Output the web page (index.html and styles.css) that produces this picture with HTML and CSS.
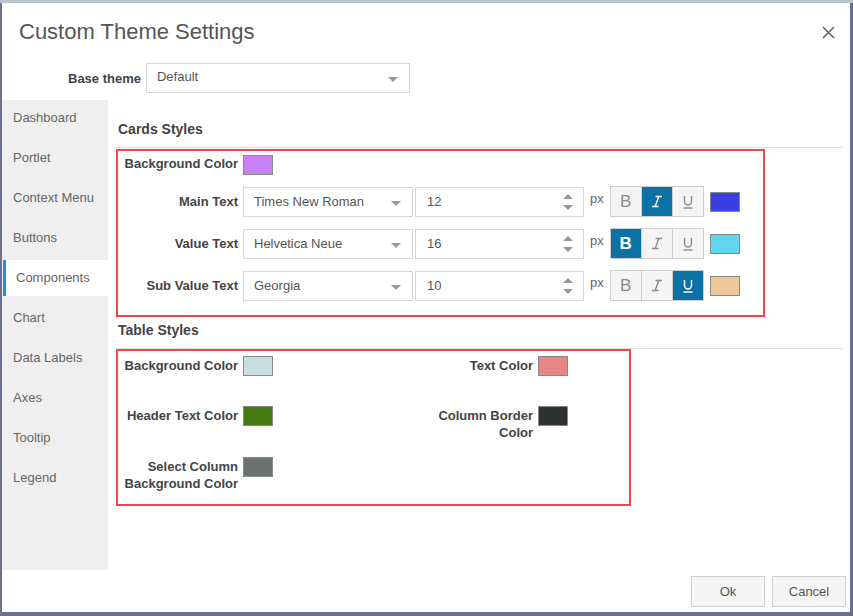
FILE: index.html
```html
<!DOCTYPE html>
<html>
<head>
<meta charset="utf-8">
<link rel="stylesheet" href="styles.css">
</head>
<body>
<div class="dialog">
  <div class="header">
    <div class="title">Custom Theme Settings</div>
    <svg class="close" width="13" height="13" viewBox="0 0 13 13"><path d="M1 1L12 12M12 1L1 12" stroke="#666" stroke-width="1.6" fill="none"/></svg>
  </div>
  <div class="base-row">
    <span class="base-label">Base theme</span>
    <div class="select base-select"><span>Default</span><i class="caret"></i></div>
  </div>
  <div class="main">
    <ul class="sidebar">
      <li>Dashboard</li>
      <li>Portlet</li>
      <li>Context Menu</li>
      <li>Buttons</li>
      <li class="active">Components</li>
      <li>Chart</li>
      <li>Data Labels</li>
      <li>Axes</li>
      <li>Tooltip</li>
      <li>Legend</li>
    </ul>
    <div class="content">
      <h2 class="section-title">Cards Styles</h2>
      <div class="box cards">
        <div class="color-row">
          <span class="label">Background Color</span>
          <span class="swatch" style="background:#c881f2"></span>
        </div>
        <div class="font-row">
          <span class="label">Main Text</span>
          <div class="select font-select"><span>Times New Roman</span><i class="caret"></i></div>
          <div class="number"><span>12</span><i class="spin"><b class="up"></b><b class="down"></b></i></div>
          <span class="px">px</span>
          <div class="btn-group">
            <span class="fbtn"><span class="bold-b">B</span></span>
            <span class="fbtn on"><svg width="12" height="13" viewBox="0 0 12 13"><path d="M4.5 1.5H11M1 11.5H7.5M7.8 1.5L4.2 11.5" stroke="currentColor" stroke-width="1.4" fill="none"/></svg></span>
            <span class="fbtn"><svg width="12" height="14" viewBox="0 0 12 14"><path d="M2.5 1V6.5A3.5 3.5 0 0 0 9.5 6.5V1" stroke="currentColor" stroke-width="1.4" fill="none"/><path d="M1.5 13H10.5" stroke="currentColor" stroke-width="1.4"/></svg></span>
          </div>
          <span class="swatch sw-row" style="background:#3b3fe3"></span>
        </div>
        <div class="font-row">
          <span class="label">Value Text</span>
          <div class="select font-select"><span>Helvetica Neue</span><i class="caret"></i></div>
          <div class="number"><span>16</span><i class="spin"><b class="up"></b><b class="down"></b></i></div>
          <span class="px">px</span>
          <div class="btn-group">
            <span class="fbtn on"><span class="bold-b">B</span></span>
            <span class="fbtn"><svg width="12" height="13" viewBox="0 0 12 13"><path d="M4.5 1.5H11M1 11.5H7.5M7.8 1.5L4.2 11.5" stroke="currentColor" stroke-width="1.4" fill="none"/></svg></span>
            <span class="fbtn"><svg width="12" height="14" viewBox="0 0 12 14"><path d="M2.5 1V6.5A3.5 3.5 0 0 0 9.5 6.5V1" stroke="currentColor" stroke-width="1.4" fill="none"/><path d="M1.5 13H10.5" stroke="currentColor" stroke-width="1.4"/></svg></span>
          </div>
          <span class="swatch sw-row" style="background:#62d6ef"></span>
        </div>
        <div class="font-row">
          <span class="label">Sub Value Text</span>
          <div class="select font-select"><span>Georgia</span><i class="caret"></i></div>
          <div class="number"><span>10</span><i class="spin"><b class="up"></b><b class="down"></b></i></div>
          <span class="px">px</span>
          <div class="btn-group">
            <span class="fbtn"><span class="bold-b">B</span></span>
            <span class="fbtn"><svg width="12" height="13" viewBox="0 0 12 13"><path d="M4.5 1.5H11M1 11.5H7.5M7.8 1.5L4.2 11.5" stroke="currentColor" stroke-width="1.4" fill="none"/></svg></span>
            <span class="fbtn on"><svg width="12" height="14" viewBox="0 0 12 14"><path d="M2.5 1V6.5A3.5 3.5 0 0 0 9.5 6.5V1" stroke="currentColor" stroke-width="1.4" fill="none"/><path d="M1.5 13H10.5" stroke="currentColor" stroke-width="1.4"/></svg></span>
          </div>
          <span class="swatch sw-row" style="background:#efc89c"></span>
        </div>
      </div>
      <h2 class="section-title second">Table Styles</h2>
      <div class="box table">
        <div class="color-row">
          <span class="label">Background Color</span>
          <span class="swatch" style="background:#c7dfe0"></span>
        </div>
        <div class="color-row">
          <span class="label">Text Color</span>
          <span class="swatch" style="background:#e88585"></span>
        </div>
        <div class="color-row">
          <span class="label">Header Text Color</span>
          <span class="swatch" style="background:#447a10"></span>
        </div>
        <div class="color-row">
          <span class="label">Column Border Color</span>
          <span class="swatch" style="background:#2c3230"></span>
        </div>
        <div class="color-row">
          <span class="label">Select Column Background Color</span>
          <span class="swatch" style="background:#6b7270"></span>
        </div>
      </div>
    </div>
  </div>
  <div class="footer">
    <button class="btn">Ok</button>
    <button class="btn">Cancel</button>
  </div>
</div>
</body>
</html>
```
FILE: styles.css
```css
* { box-sizing: border-box; }
html, body { margin: 0; padding: 0; }
body {
  width: 853px;
  height: 616px;
  overflow: hidden;
  background: linear-gradient(to bottom, #b9c4cc 0, #b9c4cc 3px, #6e6f8c 3px);
  font-family: "Liberation Sans", Arial, sans-serif;
  font-size: 13px;
  color: #555;
}
.dialog {
  margin: 3px 0 0 2px;
  width: 848px;
  height: 609px;
  background: #fff;
  display: flex;
  flex-direction: column;
}
.header {
  height: 57px;
  display: flex;
  align-items: center;
  justify-content: space-between;
  padding: 0 15px 0 17px;
}
.title {
  font-size: 22px;
  color: #555;
}
.close { margin-top: 2px; }
.base-row {
  margin-top: 3px;
  height: 30px;
  display: flex;
  align-items: center;
  padding-left: 66px;
}
.base-label {
  font-weight: bold;
  color: #444;
  margin-right: 5px;
}
.select {
  position: relative;
  height: 30px;
  border: 1px solid #d6d6d6;
  background: #fff;
  display: flex;
  align-items: center;
  padding-left: 10px;
  color: #555;
}
.base-select { width: 264px; padding-bottom: 3px; }
.caret {
  position: absolute;
  right: 11px;
  top: 13px;
  width: 0;
  height: 0;
  border-left: 5px solid transparent;
  border-right: 5px solid transparent;
  border-top: 5px solid #999;
}
.main {
  margin-top: 7px;
  display: flex;
  height: 470px;
}
.sidebar {
  list-style: none;
  margin: 0;
  padding: 0;
  width: 106px;
  background: #efefef;
}
.sidebar li {
  height: 36px;
  line-height: 36px;
  margin-bottom: 4px;
  padding-left: 11px;
  color: #666;
}
.sidebar li.active {
  background: #fff;
  margin-left: 1px;
  border-left: 3px solid #1d92d8;
  padding-left: 10px;
}
.content {
  flex: 1;
  padding: 0 7px 0 10px;
}
.section-title {
  margin: 20px 0 0;
  font-size: 14px;
  line-height: 18px;
  font-weight: bold;
  color: #444;
  padding-bottom: 9px;
  border-bottom: 1px solid #dedede;
}
.section-title.second { margin-top: 4px; }
.box {
  border: 2px solid #f04646;
  margin-left: -2px;
}
.cards {
  width: 649px;
  margin-top: 1px;
  padding: 4px 0 14px 6px;
}
.label {
  width: 114px;
  text-align: right;
  font-weight: bold;
  color: #444;
  line-height: 17px;
  flex: none;
}
.color-row {
  display: flex;
  align-items: flex-start;
  gap: 5px;
}
.swatch {
  display: block;
  width: 30px;
  height: 20px;
  border: 1px solid #888;
  flex: none;
}
.table .label { padding-top: 1px; }
.font-row {
  display: flex;
  align-items: center;
  height: 31px;
  margin-top: 11px;
}
.font-row .label { margin-right: 5px; }
.font-select { width: 170px; }
.number {
  position: relative;
  width: 169px;
  height: 30px;
  margin-left: 2px;
  border: 1px solid #d6d6d6;
  display: flex;
  align-items: center;
  padding-left: 11px;
  color: #555;
}
.spin {
  position: absolute;
  right: 10px;
  top: 6px;
  width: 10px;
  height: 16px;
}
.spin b {
  position: absolute;
  left: 0;
  width: 0;
  height: 0;
  border-left: 5px solid transparent;
  border-right: 5px solid transparent;
}
.spin .up { top: 0; border-bottom: 5px solid #999; }
.spin .down { top: 11px; border-top: 5px solid #999; }
.px {
  margin: 0 6px;
  align-self: flex-start;
  padding-top: 5px;
  color: #666;
}
.btn-group {
  display: flex;
  height: 31px;
  border: 1px solid #cfcfcf;
}
.fbtn {
  width: 31px;
  display: flex;
  align-items: center;
  justify-content: center;
  background: #f5f5f5;
  color: #8a8a8a;
  border-left: 1px solid #cfcfcf;
}
.fbtn:first-child { border-left: none; width: 30px; }
.fbtn.on { background: #0c72a6; color: #fff; }
.bold-b { font-size: 17px; line-height: 1; }
.fbtn.on .bold-b { font-weight: bold; }
.sw-row { margin-left: 6px; margin-top: 1px; }
.table {
  width: 515px;
  padding: 5px 0 12px 6px;
  display: grid;
  grid-template-columns: 295px auto;
  grid-template-rows: 50px 51px auto;
}
.footer {
  flex: 1;
  display: flex;
  justify-content: flex-end;
  align-items: flex-start;
  gap: 7px;
  padding: 6px 4px 0 0;
}
.btn {
  width: 74px;
  height: 31px;
  background: #f5f5f5;
  border: 1px solid #cfcfcf;
  font-family: "Liberation Sans", Arial, sans-serif;
  font-size: 13px;
  color: #555;
  padding: 0;
}
```
